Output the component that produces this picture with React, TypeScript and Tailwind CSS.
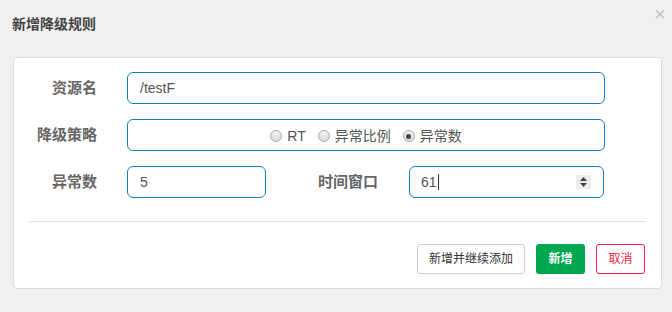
import React from "react";

const font = {
  fontFamily: '"Liberation Sans", "Noto Sans CJK SC", sans-serif',
};

function Radio({ checked, label }: { checked?: boolean; label: string }) {
  return (
    <label className="flex items-center gap-[5px] text-[14px] text-[#555]">
      <span className="w-[12px] h-[12px] rounded-full border border-[#a9a9a9] bg-gradient-to-b from-[#f4f4f4] to-[#dcdcdc] flex items-center justify-center">
        {checked && <span className="w-[5px] h-[5px] rounded-full bg-[#444]" />}
      </span>
      <span>{label}</span>
    </label>
  );
}

export default function App() {
  return (
    <div className="w-[672px] h-[312px] bg-[#f0f0f0] relative overflow-hidden" style={font}>
      {/* header */}
      <div className="h-[57px] flex items-center pl-[12px] pb-[9px]">
        <h3 className="text-[14px] font-bold text-[#444]">新增降级规则</h3>
      </div>
      <span className="absolute right-[6px] top-[3px] text-[21px] leading-none text-[#c4c4c4]">×</span>

      {/* card */}
      <div className="mx-[13px] w-[649px] bg-white border border-[#dcdcdc] rounded-[4px] pt-[14px] pb-[14px]">
        <div className="flex flex-col gap-[15px]">
          <div className="flex items-center h-[32px]">
            <div className="w-[83px] text-right text-[15px] font-bold text-[#666]">资源名</div>
            <div className="ml-[30px] w-[478px] h-[32px] border border-[#1580c2] rounded-[6px] flex items-center px-[12px] text-[14px] text-[#555]">
              /testF
            </div>
          </div>
          <div className="flex items-center h-[32px]">
            <div className="w-[83px] text-right text-[15px] font-bold text-[#666]">降级策略</div>
            <div className="ml-[30px] w-[478px] h-[32px] border border-[#1580c2] rounded-[6px] flex items-center justify-center gap-[12px] pt-[2px]">
              <Radio label="RT" />
              <Radio label="异常比例" />
              <Radio label="异常数" checked />
            </div>
          </div>
          <div className="flex items-center h-[32px]">
            <div className="w-[83px] text-right text-[15px] font-bold text-[#666]">异常数</div>
            <div className="ml-[30px] w-[139px] h-[32px] border border-[#1580c2] rounded-[6px] flex items-center px-[12px] text-[14px] text-[#555]">
              5
            </div>
            <div className="w-[112px] text-right text-[15px] font-bold text-[#666]">时间窗口</div>
            <div className="ml-[31px] w-[195px] h-[32px] border border-[#1580c2] rounded-[6px] flex items-center pl-[11px] pr-[12px] text-[14px] text-[#555]">
              <span>61</span>
              <span className="w-[1px] h-[16px] bg-[#333] ml-[1px]" />
              <span className="ml-auto w-[15px] h-[14px] bg-[#ececec] flex flex-col items-center justify-center gap-[2px]">
                <svg width="7" height="4" viewBox="0 0 7 4"><path d="M3.5 0L7 4H0z" fill="#444" /></svg>
                <svg width="7" height="4" viewBox="0 0 7 4"><path d="M0 0h7L3.5 4z" fill="#444" /></svg>
              </span>
            </div>
          </div>
        </div>

        <div className="mx-[15px] mt-[23px] h-[1px] bg-[#e2e2e2]" />

        <div className="flex justify-end gap-[11px] mr-[16px] mt-[22px]">
          <button className="h-[30px] px-[11px] border border-[#cfcfcf] rounded-[3px] bg-white text-[12px] text-[#333]">
            新增并继续添加
          </button>
          <button className="h-[30px] w-[49px] rounded-[3px] bg-[#00a650] text-[12px] text-white font-bold">
            新增
          </button>
          <button className="h-[30px] w-[49px] border border-[#f0223f] rounded-[3px] bg-white text-[12px] text-[#f0223f]">
            取消
          </button>
        </div>
      </div>
    </div>
  );
}
